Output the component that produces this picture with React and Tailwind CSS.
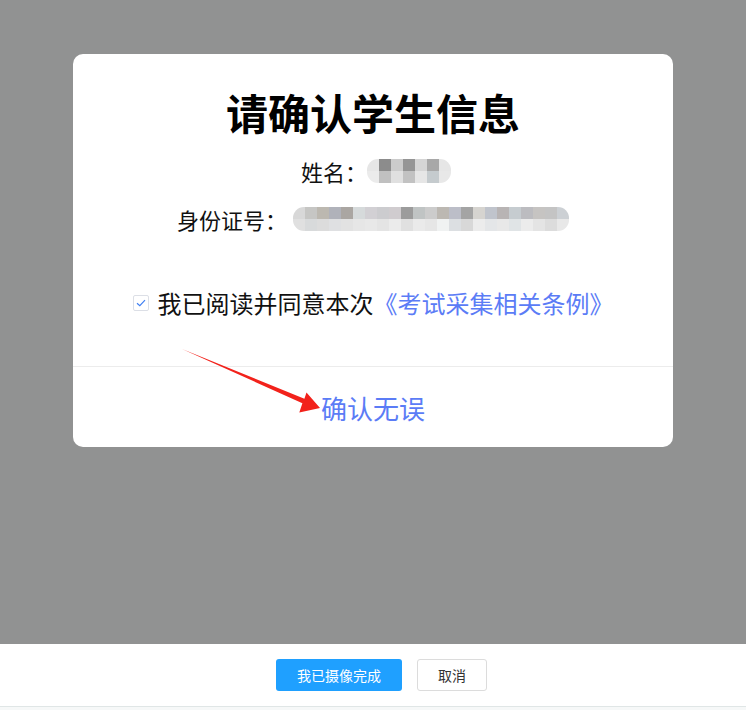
import React, { useState } from "react";

const nameTop = ["#e6e6e6", "#8c8c8c", "#cbcbcb", "#959595", "#d5d5d5", "#a8a8a8", "#e6e6e6"];
const nameBottom = ["#ebebeb", "#c0c0c0", "#e0e0e0", "#c2c2c2", "#e6e6e6", "#c5cbce", "#e8e8e8"];

const idTop = [
  "#d8d8d8", "#c6c6c4", "#bcb8b0", "#b0b2ba", "#aaa6a2", "#d6dadb", "#d2d0d4", "#cccccf",
  "#d0cccf", "#9c9c9c", "#c0c4c4", "#cccccc", "#bcb8b2", "#bcbec8", "#a4a4a4", "#d6d4d0",
  "#c0c4cc", "#b8b4b4", "#c6ccd0", "#bcbcc0", "#c6c4c2", "#c4c4c4", "#ccd0d4",
];
const idBottom = [
  "#e0e0e0", "#d8dadb", "#dcdcdc", "#dfe0e2", "#e2e2e2", "#e6e6e6", "#e8e8e8", "#e4e4e4",
  "#ebebeb", "#e0e0e0", "#eaeaea", "#e6e6e6", "#f0f2f2", "#dcdfe2", "#d8d8d8", "#ececec",
  "#e4e6e8", "#e8e8e8", "#e0e4e6", "#ececec", "#e4e4e4", "#dcdcdc", "#e8e8e8",
];

// blurred mosaic standing in for hidden personal data
const Mosaic = ({ top, bottom, cell, h }) => (
  <div className="flex flex-col overflow-hidden rounded-[11px]">
    {[top, bottom].map((row, r) => (
      <div key={r} className="flex">
        {row.map((c, i) => (
          <div key={i} style={{ background: c, width: cell, height: h }} />
        ))}
      </div>
    ))}
  </div>
);

const App = () => {
  const [agreed, setAgreed] = useState(true);

  return (
    <div
      className="relative flex h-[710px] w-full flex-col overflow-hidden"
      style={{ fontFamily: '"Noto Sans CJK SC", "Noto Sans", sans-serif' }}
    >
      {/* dimmed overlay with the dialog */}
      <div className="flex h-[644px] flex-col bg-[#919292] pl-[73px] pt-[54px]">
        <div className="flex w-[600px] flex-col items-center rounded-[10px] bg-white pt-[33px]">
          <h1 className="text-[42px] font-bold leading-[50px] text-black">请确认学生信息</h1>

          <div className="mt-[18px] flex h-[32px] items-center pl-[6px] text-[22px] text-[#111]">
            <span>姓名：</span>
            <div>
              <Mosaic top={nameTop} bottom={nameBottom} cell={12} h={12} />
            </div>
          </div>

          <div className="mt-[16px] flex h-[32px] items-center text-[22px] text-[#111]">
            <span>身份证号：</span>
            <div className="ml-[6px]">
              <Mosaic top={idTop} bottom={idBottom} cell={12} h={12} />
            </div>
          </div>

          <div className="mt-[52px] flex h-[32px] items-center text-[24px] text-[#111]">
            <button
              onClick={() => setAgreed(!agreed)}
              className="mr-[9px] flex h-[16px] w-[16px] items-center justify-center rounded-[2px] border border-[#dcdfe6] bg-white"
            >
              {agreed && (
                <svg width="10" height="8" viewBox="0 0 10 8">
                  <path d="M1 4.2 L3.8 6.6 L9 1.2" fill="none" stroke="#3f7ff2" strokeWidth="1.2" />
                </svg>
              )}
            </button>
            <span>我已阅读并同意本次</span>
            <span className="text-[#5b7cf6]">《考试采集相关条例》</span>
          </div>

          <div className="mt-[47px] h-px w-full bg-[#ececec]" />

          <div className="flex h-[80px] items-center justify-center text-[26px] text-[#5b7cf6]">
            确认无误
          </div>
        </div>
      </div>

      {/* bottom action bar */}
      <div className="flex h-[62px] items-center justify-center gap-[15px] bg-white pl-[17px]">
        <button className="h-[32px] w-[126px] rounded-[3px] bg-[#1fa0ff] text-[14px] text-white">
          我已摄像完成
        </button>
        <button className="h-[32px] w-[70px] rounded-[3px] border border-[#dcdcdc] bg-white text-[14px] text-[#333]">
          取消
        </button>
      </div>
      <div className="h-px bg-[#e0e6e6]" />
      <div className="flex-1 bg-[#f6f8f8]" />

      {/* annotation arrow */}
      <svg className="pointer-events-none absolute left-0 top-0" width="746" height="710">
        <polygon
          points="182,349 304.4,398.7 306.5,392.6 320,408 299.3,412.4 302.4,403.3"
          fill="#f2221b"
        />
      </svg>
    </div>
  );
};

export default App;
